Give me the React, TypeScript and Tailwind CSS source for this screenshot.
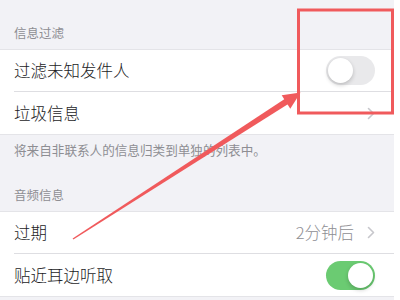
import React from 'react';

const font = { fontFamily: '"Noto Sans CJK SC", "Noto Sans", sans-serif' };

const Chevron = () => (
  <svg width="8" height="13" viewBox="0 0 8 13" className="shrink-0">
    <path d="M1.5 1.5 L6.5 6.5 L1.5 11.5" fill="none" stroke="#c7c7cc" strokeWidth="1.6" strokeLinecap="round" strokeLinejoin="round" />
  </svg>
);

const Toggle = ({ on }: { on: boolean }) => (
  <div
    className={`w-[49px] h-[29px] rounded-full p-[2px] flex shrink-0 ${
      on ? 'bg-[#6bcb72] justify-end' : 'bg-[#e9e9eb] justify-start'
    }`}
  >
    <div className="w-[25px] h-[25px] rounded-full bg-white shadow-[0_2px_4px_rgba(0,0,0,0.2)]" />
  </div>
);

const Row = ({ label, children, last }: { label: string; children?: React.ReactNode; last?: boolean }) => (
  <div className="pl-[14px]">
    <div className={`h-[42px] flex items-center justify-between pr-[19px] ${last ? '' : 'border-b border-[#dedee2]'}`}>
      <span className="text-[16.5px] text-[#1c1c1e] font-light">{label}</span>
      {children}
    </div>
  </div>
);

export default function App() {
  return (
    <div className="relative w-[400px] h-[300px] overflow-hidden bg-white flex" style={font}>
      <div className="w-[394px] h-full bg-[#f2f2f6] flex flex-col">
        <div className="h-[49px] flex items-end pb-[6px] pl-[14px] text-[12.5px] text-[#8e8e93]">信息过滤</div>
        <div className="bg-white border-y border-[#e4e4e8]">
          <Row label="过滤未知发件人">
            <Toggle on={false} />
          </Row>
          <Row label="垃圾信息" last>
            <Chevron />
          </Row>
        </div>
        <div className="pl-[14px] pt-[5px] text-[12.6px] text-[#8e8e93] leading-[20px]">将来自非联系人的信息归类到单独的列表中。</div>
        <div className="h-[51px] flex items-end pb-[6px] pl-[14px] text-[12.5px] text-[#8e8e93]">音频信息</div>
        <div className="bg-white border-y border-[#e4e4e8]">
          <Row label="过期">
            <div className="flex items-center gap-[13px]">
              <span className="text-[16.5px] text-[#8e8e93] font-light">2分钟后</span>
              <Chevron />
            </div>
          </Row>
          <Row label="贴近耳边听取" last>
            <Toggle on />
          </Row>
        </div>
      </div>

      <svg className="absolute inset-0 pointer-events-none" width="400" height="300" viewBox="0 0 400 300">
        <rect x="298.5" y="10" width="94" height="103" fill="none" stroke="#f05a5c" strokeWidth="3" />
        <polygon points="72.6,238.4 73.4,239.6 289,103.5 285.4,98.5" fill="#f05a5c" />
        <polygon points="300.5,92.5 281.7,95.3 290.3,108.7" fill="#f05a5c" />
      </svg>
    </div>
  );
}
